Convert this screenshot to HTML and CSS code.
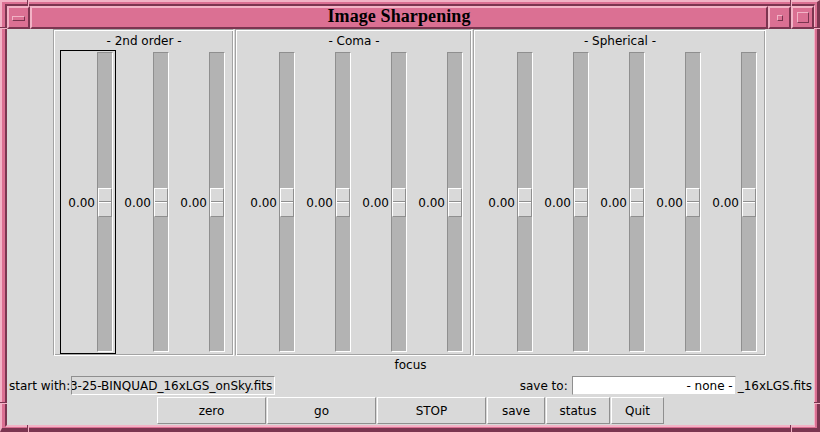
FILE: index.html
```html
<!DOCTYPE html>
<html>
<head>
<meta charset="utf-8">
<title>Image Sharpening</title>
<link rel="stylesheet" href="styles.css">
</head>
<body>
<div class="win">
	<span class="notch v nt-l"></span>
	<span class="notch v nt-r"></span>
	<span class="notch v nb-l"></span>
	<span class="notch v nb-r"></span>
	<span class="notch h nl-t"></span>
	<span class="notch h nl-b"></span>
	<span class="notch h nr-t"></span>
	<span class="notch h nr-b"></span>
	<div class="inner">
		<div class="titlebar">
			<div class="tb_btn tb_menu"><span class="ico_menu"></span></div>
			<div class="tb_title">Image Sharpening</div>
			<div class="tb_btn tb_min"><span class="ico_min"></span></div>
			<div class="tb_btn tb_max"><span class="ico_max"></span></div>
		</div>
		<div class="client">
			<div class="groups">
				<div class="group">
					<div class="group_label">- 2nd order -</div>
					<div class="scales">
						<div class="scale focused"><span class="val">0.00</span><div class="trough"><div class="thumb"></div></div></div>
						<div class="scale"><span class="val">0.00</span><div class="trough"><div class="thumb"></div></div></div>
						<div class="scale"><span class="val">0.00</span><div class="trough"><div class="thumb"></div></div></div>
					</div>
				</div>
				<div class="group">
					<div class="group_label">- Coma -</div>
					<div class="scales">
						<div class="scale"><span class="val">0.00</span><div class="trough"><div class="thumb"></div></div></div>
						<div class="scale"><span class="val">0.00</span><div class="trough"><div class="thumb"></div></div></div>
						<div class="scale"><span class="val">0.00</span><div class="trough"><div class="thumb"></div></div></div>
						<div class="scale"><span class="val">0.00</span><div class="trough"><div class="thumb"></div></div></div>
					</div>
				</div>
				<div class="group">
					<div class="group_label">- Spherical -</div>
					<div class="scales">
						<div class="scale"><span class="val">0.00</span><div class="trough"><div class="thumb"></div></div></div>
						<div class="scale"><span class="val">0.00</span><div class="trough"><div class="thumb"></div></div></div>
						<div class="scale"><span class="val">0.00</span><div class="trough"><div class="thumb"></div></div></div>
						<div class="scale"><span class="val">0.00</span><div class="trough"><div class="thumb"></div></div></div>
						<div class="scale"><span class="val">0.00</span><div class="trough"><div class="thumb"></div></div></div>
					</div>
				</div>
			</div>
			<div class="focus_label">focus</div>
			<div class="files">
				<span class="lbl">start with:</span>
				<div class="entry entry_start"><span>3-25-BINQUAD_16xLGS_onSky.fits</span></div>
				<span class="spacer"></span>
				<span class="lbl">save to:</span>
				<div class="entry entry_save"><span>- none -</span></div>
				<span class="lbl suffix">_16xLGS.fits</span>
			</div>
			<div class="buttons">
				<button class="btn btn_wide">zero</button>
				<button class="btn btn_wide">go</button>
				<button class="btn btn_wide">STOP</button>
				<button class="btn btn_save">save</button>
				<button class="btn btn_status">status</button>
				<button class="btn btn_quit">Quit</button>
			</div>
		</div>
	</div>
</div>
</body>
</html>
```

FILE: styles.css
```css
body{margin: 0;overflow: hidden;font-family: "DejaVu Sans", sans-serif;font-size: 12px;color: #000;}

/* window manager frame */
.win{position: relative;display: flex;width: 820px;height: 432px;box-sizing: border-box;background: #db7093;border-style: solid;border-width: 2px 3px 4px 2px;border-color: #f2b3c6 #7b3550 #7b3550 #f2b3c6;padding: 2px 2px 1px 3px;}
.inner{flex: 1;display: flex;flex-direction: column;border-style: solid;border-width: 2px 1px 2px 2px;border-color: #7b3550 #f2b3c6 #f2b3c6 #7b3550;}
.notch{position: absolute;background: #7b3550;}
.notch.v{width: 1px;border-right: 1px solid #f2b3c6;}
.notch.h{height: 1px;border-bottom: 1px solid #f2b3c6;}
.nt-l{left: 25px;top: -2px;height: 6px;}
.nt-r{left: 788px;top: -2px;height: 6px;}
.nb-l{left: 25px;bottom: -4px;height: 7px;}
.nb-r{left: 788px;bottom: -4px;height: 7px;}
.nl-t{left: -2px;top: 25px;width: 7px;}
.nl-b{left: -2px;top: 400px;width: 7px;}
.nr-t{right: -3px;top: 25px;width: 6px;}
.nr-b{right: -3px;top: 400px;width: 6px;}

.titlebar{display: flex;height: 23px;}
.tb_btn,.tb_title{box-sizing: border-box;background: #db7093;border: 2px solid;border-color: #f2b3c6 #7b3550 #7b3550 #f2b3c6;}
.tb_btn{width: 23px;display: flex;align-items: center;justify-content: center;}
.tb_title{flex: 1;text-align: center;font-family: "Liberation Serif", serif;font-weight: bold;font-size: 18px;line-height: 16px;letter-spacing: 0.1px;}
.ico_menu,.ico_min,.ico_max{display: block;box-sizing: border-box;border: 1px solid;border-color: #f2b3c6 #7b3550 #7b3550 #f2b3c6;}
.ico_menu{width: 13px;height: 5px;margin-top: 1px;}
.ico_min{width: 6px;height: 6px;margin-top: 1px;}
.ico_max{width: 12px;height: 11px;}

/* client area */
.client{flex: 1;display: flex;flex-direction: column;background: #d9d9d9;}
.groups{display: flex;gap: 1px;padding-left: 46px;}
.group{border: 1px solid;border-color: #a3a3a3 #fff #fff #a3a3a3;box-shadow: inset 1px 1px #fff, inset -1px -1px #a3a3a3;padding: 4px 5px 1px 6px;}
.group_label{text-align: center;line-height: 14px;height: 14px;margin-bottom: 2px;}
.scales{display: flex;}
.scale{display: flex;align-items: center;width: 56px;height: 304px;box-sizing: border-box;border: 1px solid transparent;padding: 1px 2px 1px 0;}
.scale.focused{border-color: #000;}
.val{width: 36px;box-sizing: border-box;padding-right: 2px;text-align: right;margin-top: 1px;}
.trough{align-self: stretch;width: 16px;box-sizing: border-box;background: #b3b3b3;border: 1px solid;border-color: #8f8f8f #fff #fff #8f8f8f;display: flex;flex-direction: column;justify-content: center;}
.thumb{height: 29px;box-sizing: border-box;background: #d9d9d9;border: 1px solid;border-color: #fff #8f8f8f #8f8f8f #fff;display: flex;flex-direction: column;justify-content: center;}
.thumb:after{content: "";display: block;border-top: 1px solid #8f8f8f;border-bottom: 1px solid #fff;}

.focus_label{text-align: center;height: 20px;line-height: 19px;}

.files{display: flex;align-items: center;height: 19px;padding: 0 2px 0 2px;}
.lbl{white-space: nowrap;}
.spacer{flex: 1;}
.entry{height: 19px;box-sizing: border-box;border: 1px solid;border-color: #8f8f8f #fff #fff #8f8f8f;display: flex;align-items: center;justify-content: flex-end;overflow: hidden;white-space: nowrap;padding-right: 2px;}
.entry_start{width: 204px;margin-left: 1px;}
.entry_save{width: 164px;margin: 0 2px 0 4px;background: #fff;border-color: #8f8f8f #d9d9d9 #d9d9d9 #8f8f8f;}

.buttons{display: flex;justify-content: center;gap: 1px;margin-top: 2px;height: 27px;}
.btn{box-sizing: border-box;height: 27px;padding: 0;margin: 0;background: #d9d9d9;border: 1px solid;border-color: #fff #8f8f8f #8f8f8f #fff;font: inherit;color: #000;}
.btn_wide{width: 109px;}
.btn_save{width: 58px;}
.btn_status{width: 64px;}
.btn_quit{width: 53px;}
```
